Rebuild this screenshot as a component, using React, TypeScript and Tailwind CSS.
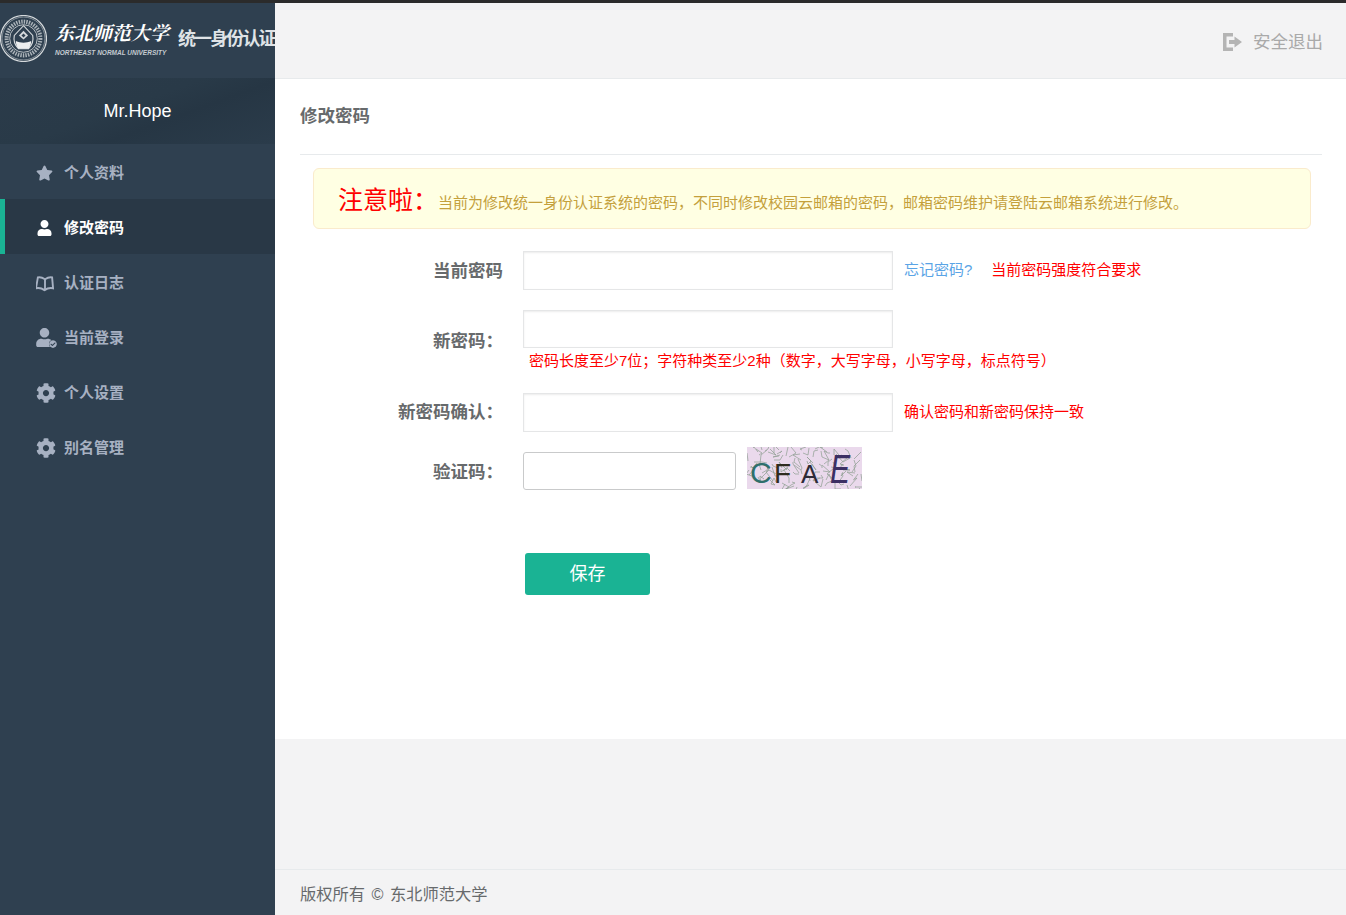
import { FaCheckCircle, FaCog, FaStar, FaUser } from 'react-icons/fa';

const font = 'font-["Liberation_Sans","Noto_Sans_CJK_SC",sans-serif]';

function Seal() {
  return (
    <svg viewBox="1 1 46 46" className="h-[47px] w-[47px] shrink-0 text-[#d5d9dc]">
      <circle cx="24" cy="24" r="22.5" fill="none" stroke="currentColor" strokeWidth="1.2" />
      <circle cx="24" cy="24" r="21" fill="none" stroke="currentColor" strokeWidth="0.5" />
      <circle cx="24" cy="24" r="16.5" fill="none" stroke="currentColor" strokeWidth="4" strokeDasharray="1.4 1.1" opacity="0.75" />
      <circle cx="24" cy="24" r="13.5" fill="#2f4050" stroke="currentColor" strokeWidth="0.8" />
      <path d="M24 11.5 33 21c1 5-1 10-4 13h-10c-3-3-5-8-4-13z" fill="#2f4050" stroke="currentColor" strokeWidth="1.1" />
      <path d="M24 16.5 28.5 21 24 25 19.5 21z" fill="currentColor" />
      <path d="M24 19 26 21 24 23 22 21z" fill="#2f4050" />
      <path d="M16.5 26.500c2.500 1.200 5 1.600 7.500 1.600s5-.4 7.500-1.600c0 3-1 5.500-2.500 7.500h-10c-1.500-2-2.500-4.500-2.500-7.500z" fill="#eceeef" />
    </svg>
  );
}

function SidebarLogo() {
  return (
    <div className="flex h-[75px] items-center overflow-hidden pb-[5px]">
      <Seal />
      <div className="ml-[8px] w-[123px] shrink-0">
        <div className='pb-[4px] font-["Noto_Serif_CJK_SC","Noto_Sans_CJK_SC",serif] text-[19px] leading-[26px] font-bold whitespace-nowrap text-white italic'>东北师范大学</div>
        <div className='font-["Liberation_Sans",sans-serif] text-[6.500px] leading-[8px] font-bold whitespace-nowrap text-[#c4cbd1] italic'>NORTHEAST NORMAL UNIVERSITY</div>
      </div>
      <div className="pt-[2px] text-[18px] font-bold tracking-[-1.900px] whitespace-nowrap text-[#dfe3e6]">统一身份认证</div>
    </div>
  );
}

function LoginIcon() {
  return (
    <span className="relative block h-[20px] w-[21px]">
      <FaUser className="h-[19px] w-[17px]" />
      <FaCheckCircle className="absolute right-0 bottom-0 h-[8px] w-[8px] rounded-full bg-[#2f4050]" />
    </span>
  );
}

function BookIcon() {
  return (
    <svg viewBox="0 0 19 19" className="h-[18px] w-[18px]" fill="none" stroke="currentColor" strokeWidth="2">
      <path d="M2 3.500c2.500-.5 5 .3 7.500 2 2.500-1.700 5-2.500 7.500-2l1 11.500c-3.200-.7-6.200 0-9 2-2.800-2-5.800-2.700-9-2z" />
      <path d="M9.500 5.500v11.500" />
    </svg>
  );
}

function ExitIcon() {
  return (
    <svg viewBox="0 0 19 18" className="h-[18px] w-[19px]" fill="currentColor">
      <path d="M0 0h10v3.500H3.500v11H10V18H0z" />
      <path d="M11.500 3.500 19 9l-7.500 5.500V11H6V7h5.500z" />
    </svg>
  );
}

const menu = [
  { label: '个人资料', icon: <FaStar className="h-[16px] w-[17px]" /> },
  { label: '修改密码', icon: <FaUser className="h-[16px] w-[15px]" />, active: true },
  { label: '认证日志', icon: <BookIcon /> },
  { label: '当前登录', icon: <LoginIcon /> },
  { label: '个人设置', icon: <FaCog className="h-[20px] w-[20px]" /> },
  { label: '别名管理', icon: <FaCog className="h-[20px] w-[20px]" /> },
];

function Sidebar() {
  return (
    <aside className="w-[275px] shrink-0 overflow-hidden bg-[#2f4050]">
      <SidebarLogo />
      <div className="flex h-[66px] items-center justify-center bg-[linear-gradient(160deg,#2b3b4a_0%,#293a48_45%,#263644_62%,#2b3c4b_100%)] text-[18px] text-white">Mr.Hope</div>
      <nav>
        {menu.map((item) => (
          <div
            key={item.label}
            className={
              item.active
                ? 'flex h-[55px] items-center border-l-[5px] border-[#1ab394] bg-[#293846] pl-[31px] text-white'
                : 'flex h-[55px] items-center pl-[36px] text-[#a7b1c2]'
            }
          >
            <span className={item.active ? 'flex w-[28px] items-center pt-[2px] pl-px' : 'flex w-[28px] items-center pt-[2px]'}>{item.icon}</span>
            <span className="pt-[3px] text-[15px] font-bold">{item.label}</span>
          </div>
        ))}
      </nav>
    </aside>
  );
}

const noise = Array.from({ length: 90 }, (_, i) => {
  const x = (i * 37) % 115;
  const y = (i * 23) % 42;
  const dx = ((i * 13) % 17) - 8;
  const dy = ((i * 17) % 19) - 9;
  return `M${x} ${y}l${dx} ${dy}l${((i * 7) % 15) - 7} ${((i * 11) % 13) - 6}`;
});

function Captcha() {
  return (
    <div className='relative ml-[11px] flex h-[42px] w-[115px] items-baseline overflow-hidden bg-[#ead9ec] pt-[4px] pl-[3px] font-["Liberation_Sans",sans-serif]'>
      <svg viewBox="0 0 115 42" className="absolute inset-0 h-full w-full">
        <path d={noise.join('')} fill="none" stroke="#8f9f92" strokeWidth="0.9" opacity="0.8" />
      </svg>
      <span className="relative w-[24px] text-[30px] leading-[34px] text-[#2f6f6c]">C</span>
      <span className="relative w-[27px] text-[28px] leading-[34px] text-[#2f2c20]">F</span>
      <span className="relative w-[29px] text-[26px] leading-[34px] text-[#2e2a38]">A</span>
      <span className="relative origin-left scale-x-75 text-[40px] leading-[36px] text-[#3c2f63] italic">E</span>
    </div>
  );
}

function PasswordForm() {
  const label = 'w-[190px] shrink-0 text-right text-[17.500px] font-bold text-[#676a6c]';
  const box = 'block w-[370px] border border-[#e5e6e7] bg-white shadow-[inset_0_1px_2px_rgba(0,0,0,0.08)]';
  const note = 'text-[15px] text-[#ff0000]';

  return (
    <form className="mt-[22px] mr-[11px] ml-[13px]">
      <div className="flex items-center">
        <label className={`${label} pt-[2px]`}>当前密码</label>
        <input type="password" className={`${box} ml-[20px] h-[39px]`} />
        <a className="ml-[11px] text-[15px] text-[#5aa4e6]">忘记密码?</a>
        <span className={`${note} ml-[19px]`}>当前密码强度符合要求</span>
      </div>
      <div className="mt-[20px] flex items-center">
        <label className={label}>新密码：</label>
        <div className="ml-[20px]">
          <input type="password" className={`${box} h-[38px]`} />
          <div className={`${note} mt-[1px] h-[24px] pl-[6px] leading-[24px]`}>密码长度至少7位；字符种类至少2种（数字，大写字母，小写字母，标点符号）</div>
        </div>
      </div>
      <div className="mt-[20px] flex items-center">
        <label className={label}>新密码确认：</label>
        <input type="password" className={`${box} ml-[20px] h-[39px]`} />
        <span className={`${note} ml-[11px]`}>确认密码和新密码保持一致</span>
      </div>
      <div className="mt-[15px] flex items-center">
        <label className={label}>验证码：</label>
        <div className="ml-[20px] flex h-[50px] items-start">
          <input type="text" className="mt-[5px] block h-[38px] w-[213px] rounded-[3px] border border-[#c9cacb] bg-white" />
          <Captcha />
        </div>
      </div>
      <button type="button" className="mt-[56px] ml-[212px] block h-[42px] w-[125px] rounded-[3px] bg-[#1ab394] text-[18px] text-white">保存</button>
    </form>
  );
}

export default function App() {
  return (
    <div className={`${font} flex h-screen flex-col overflow-hidden bg-[#f3f3f4] text-[#676a6c]`}>
      <div className="h-[3px] shrink-0 bg-[#2b2b2b]" />
      <div className="flex min-h-0 flex-1">
        <Sidebar />
        <main className="flex min-w-0 flex-1 flex-col">
          <header className="flex h-[76px] shrink-0 items-center justify-end border-b border-[#e7eaec] pr-[23px] text-[#a9a9a9]">
            <span className="pt-[2px] text-[#b4b4b4]"><ExitIcon /></span>
            <span className="ml-[11px] pt-[4px] text-[17.500px]">安全退出</span>
          </header>
          <section className="h-[660px] shrink-0 bg-white pr-[24px] pl-[25px]">
            <div className="flex h-[76px] items-center border-b border-[#e7eaec]">
              <h2 className="text-[17.500px] font-bold">修改密码</h2>
            </div>
            <div className="mt-[13px] mr-[11px] ml-[13px] flex h-[61px] items-center rounded-[6px] border border-[#faebcc] bg-[#ffffe3] pl-[24px]">
              <span className="pt-[4px] text-[25px] text-[#ff0000]">注意啦：</span>
              <span className="pt-[10px] text-[15px] text-[#c4a03c]">当前为修改统一身份认证系统的密码，不同时修改校园云邮箱的密码，邮箱密码维护请登陆云邮箱系统进行修改。</span>
            </div>
            <PasswordForm />
          </section>
          <div className="flex-1" />
          <footer className="flex h-[46px] shrink-0 items-center border-t border-[#e7eaec] pt-[4px] pl-[25px] text-[16.250px] [word-spacing:2px]">版权所有 © 东北师范大学</footer>
        </main>
      </div>
    </div>
  );
}
